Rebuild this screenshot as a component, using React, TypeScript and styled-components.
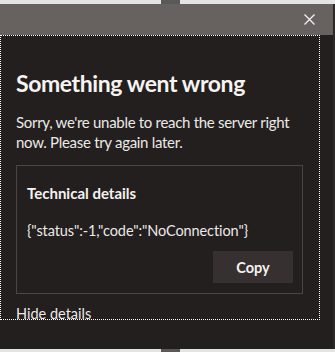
import React from "react";
import styled, { createGlobalStyle } from "styled-components";

const GlobalStyle = createGlobalStyle`
  html, body { margin: 0; padding: 0; background: #221f1e; }
  * { box-sizing: border-box; }
`;

const Page = styled.div`
  width: 335px;
  height: 352px;
  display: flex;
  flex-direction: column;
  font-family: Lato, "Open Sans", sans-serif;
  color: #f2f0ef;
  overflow: hidden;
`;

const Strip = styled.div<{ $h: number }>`
  height: ${(p) => p.$h}px;
  flex: none;
  background: #e4e4e4;
  display: flex;
  padding-left: 161px;
`;

const StripTab = styled.div`
  width: 19px;
  background: #5b5958;
`;

const Dialog = styled.div`
  flex: 1;
  display: flex;
  flex-direction: column;
  background: #221f1e;
  border-right: 2px solid #2c2827;
`;

const Header = styled.div`
  height: 31px;
  flex: none;
  background: #67625f;
  display: flex;
  align-items: center;
  justify-content: flex-end;
  padding-right: 17px;
`;

const CloseButton = styled.button`
  width: 14px;
  height: 14px;
  padding: 0;
  border: none;
  background: transparent;
  display: flex;
  align-items: center;
  justify-content: center;
  cursor: pointer;
`;

const Body = styled.div`
  flex: 1;
  display: flex;
  align-items: flex-start;
`;

const ScrollArea = styled.div`
  width: 320px;
  height: 285px;
  border: 1px dotted #ffffff;
  overflow: hidden;
  padding: 0 16px 0 15px;
`;

const Title = styled.h1`
  margin: 31px 0 0;
  font-size: 23px;
  font-weight: 700;
  letter-spacing: -0.4px;
  line-height: 32px;
  color: #f7f3f1;
`;

const Message = styled.p`
  margin: 13px 0 0;
  font-size: 15px;
  letter-spacing: -0.3px;
  line-height: 20px;
  color: #ece9e7;
`;

const DetailsBox = styled.div`
  margin-top: 13px;
  border: 1px solid #4a4645;
  padding: 17px 9px 10px 10px;
  display: flex;
  flex-direction: column;
`;

const DetailsTitle = styled.h2`
  margin: 0;
  font-size: 15px;
  font-weight: 700;
  line-height: 20px;
  color: #f5f2f0;
`;

const DetailsText = styled.div`
  margin-top: 18px;
  font-size: 14.5px;
  letter-spacing: -0.1px;
  line-height: 20px;
  color: #ece9e7;
`;

const CopyButton = styled.button`
  align-self: flex-end;
  margin-top: 10px;
  width: 80px;
  height: 32px;
  border: none;
  background: #363130;
  color: #f5f2f0;
  font-family: inherit;
  font-size: 14.5px;
  font-weight: 700;
`;

const HideLink = styled.a`
  display: block;
  margin-top: 10px;
  font-size: 14.5px;
  line-height: 20px;
  color: #ece9e7;
`;

export default function App() {
  return (
    <>
      <GlobalStyle />
      <Page>
        <Strip $h={4}>
          <StripTab />
        </Strip>
        <Dialog>
          <Header>
            <CloseButton aria-label="Close">
              <svg width="11" height="11" viewBox="0 0 11 11">
                <path d="M0.5 0.5 L10.5 10.5 M10.5 0.5 L0.5 10.5" stroke="#eeeeee" strokeWidth="1.4" fill="none" />
              </svg>
            </CloseButton>
          </Header>
          <Body>
            <ScrollArea>
              <Title>Something went wrong</Title>
              <Message>Sorry, we're unable to reach the server right now. Please try again later.</Message>
              <DetailsBox>
                <DetailsTitle>Technical details</DetailsTitle>
                <DetailsText>{'{"status":-1,"code":"NoConnection"}'}</DetailsText>
                <CopyButton>Copy</CopyButton>
              </DetailsBox>
              <HideLink>Hide details</HideLink>
            </ScrollArea>
          </Body>
        </Dialog>
        <Strip $h={3}>
          <StripTab />
        </Strip>
      </Page>
    </>
  );
}
